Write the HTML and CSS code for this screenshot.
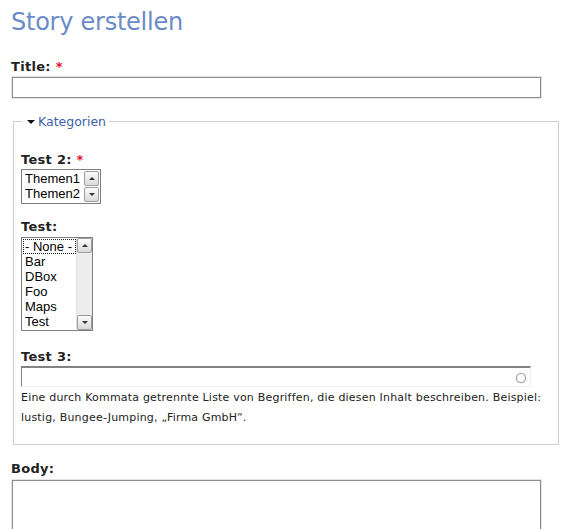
FILE: index.html
```html
<!DOCTYPE html>
<html lang="de">
<head>
<meta charset="utf-8">
<title>Story erstellen</title>
<link rel="stylesheet" href="styles.css">
</head>
<body>
<div class="page">
  <h1 class="page-title">Story erstellen</h1>
  <form class="node-form">
    <div class="form-item item-title">
      <label class="label" for="edit-title">Title: <span class="req">*</span></label>
      <input class="text-input title-input" id="edit-title" type="text">
    </div>

    <fieldset class="group">
      <legend class="legend"><span class="caret"></span><a class="legend-link" href="#">Kategorien</a></legend>

      <div class="form-item item-test2">
        <label class="label">Test 2: <span class="req">*</span></label>
        <div class="listbox lb-small" role="listbox">
          <div class="options">
            <div class="opt">Themen1</div>
            <div class="opt">Themen2</div>
          </div>
          <div class="sbar">
            <span class="sbtn up"></span>
            <span class="strack"></span>
            <span class="sbtn down"></span>
          </div>
        </div>
      </div>

      <div class="form-item item-test">
        <label class="label">Test:</label>
        <div class="listbox lb-large" role="listbox">
          <div class="options">
            <div class="opt focused">- None -</div>
            <div class="opt">Bar</div>
            <div class="opt">DBox</div>
            <div class="opt">Foo</div>
            <div class="opt">Maps</div>
            <div class="opt">Test</div>
          </div>
          <div class="sbar">
            <span class="sbtn up"></span>
            <span class="strack"></span>
            <span class="sbtn down"></span>
          </div>
        </div>
      </div>

      <div class="form-item item-test3">
        <label class="label" for="edit-test3">Test 3:</label>
        <div class="autocomplete">
          <input class="auto-input" id="edit-test3" type="text">
          <svg class="throbber" width="12" height="12" viewBox="0 0 12 12"><circle cx="6" cy="6" r="4.6" fill="none" stroke="#a9a9a9" stroke-width="1.4"/></svg>
        </div>
        <div class="description">Eine durch Kommata getrennte Liste von Begriffen, die diesen Inhalt beschreiben. Beispiel: lustig, Bungee-Jumping, „Firma GmbH“.</div>
      </div>
    </fieldset>

    <div class="form-item item-body">
      <label class="label" for="edit-body">Body:</label>
      <textarea class="body-area" id="edit-body"></textarea>
    </div>
  </form>
</div>
</body>
</html>
```

FILE: styles.css
```css
* { box-sizing: border-box; }
html, body { margin: 0; background: #fff; }
body {
  font-family: "DejaVu Sans", Verdana, sans-serif;
  color: #222;
}
.page {
  padding: 7px 12px 0 11px;
}
.page-title {
  margin: 0;
  font-size: 24px;
  line-height: 30px;
  font-weight: normal;
  letter-spacing: -0.25px;
  color: #6b8bc8;
}
.node-form {
  display: flex;
  flex-direction: column;
}
.form-item {
  display: flex;
  flex-direction: column;
  align-items: flex-start;
}
.label {
  display: block;
  font-size: 13px;
  font-weight: bold;
  line-height: 16px;
  letter-spacing: 0.3px;
  color: #222;
}
.req { color: #e3102b; }

.item-title { margin-top: 22px; }
.text-input {
  display: block;
  margin: 2px 0 0 1px;
  width: 529px;
  height: 21px;
  border: 1px solid #8e8e8e;
  box-shadow: 0 0 0 1px #e4e4e4;
  background: #fff;
  padding: 0 3px;
  font: 13px "DejaVu Sans", sans-serif;
}

.group {
  margin: 16px 2px 0 2px;
  border: 1px solid #cfcfcf;
  padding: 0 7px 16px 7px;
  min-width: 0;
}
.legend {
  margin-left: 1px;
  padding: 0 3px 0 5px;
  font-size: 12.5px;
  line-height: 15px;
  display: flex;
  align-items: center;
}
.caret {
  display: inline-block;
  width: 0;
  height: 0;
  border-left: 4px solid transparent;
  border-right: 4px solid transparent;
  border-top: 4px solid #111;
  margin-right: 3px;
  margin-top: 1px;
}
.legend-link {
  color: #3d60a8;
  text-decoration: none;
}

.item-test2 { margin-top: 23px; }
.item-test2 .listbox { margin-top: 1px; }
.item-test { margin-top: 15px; }
.item-test .listbox { margin-top: 2px; }
.item-test3 { margin-top: 18px; }

.listbox {
  display: flex;
  border: 1px solid #7f7f7f;
  background: #fff;
}
.lb-small { width: 80px; height: 35px; }
.lb-large { width: 72px; height: 94px; }
.options {
  flex: 1;
  padding: 1px 0 0 1px;
  font-family: "Liberation Sans", Arial, sans-serif;
  font-size: 13px;
  line-height: 15px;
  color: #000;
  overflow: hidden;
}
.opt {
  padding-left: 2px;
  height: 15px;
  white-space: nowrap;
}
.opt.focused {
  outline: 1px dotted #222;
  outline-offset: -1px;
}
.sbar {
  width: 16px;
  display: flex;
  flex-direction: column;
  padding: 1px 1px 1px 0;
}
.lb-large .sbar {
  background: #ededed;
  border-left: 1px solid #e2e2e2;
  padding: 0;
}
.sbtn {
  height: 15px;
  flex: none;
  border: 1px solid #9d9d9d;
  border-radius: 2px;
  background: linear-gradient(#fbfbfb, #dadada);
  display: flex;
  align-items: center;
  justify-content: center;
}
.sbtn::before {
  content: "";
  width: 0;
  height: 0;
  border-left: 3px solid transparent;
  border-right: 3px solid transparent;
}
.sbtn.up::before { border-bottom: 3px solid #333; }
.sbtn.down::before { border-top: 3px solid #333; }
.strack { flex: 1; }

.autocomplete {
  margin-top: 1px;
  width: 510px;
  height: 21px;
  display: flex;
  align-items: center;
  border-top: 2px solid #838383;
  border-left: 1px solid #838383;
  border-right: 1px solid #efefef;
  border-bottom: 1px solid #efefef;
  background: #fff;
}
.auto-input {
  flex: 1;
  height: 100%;
  border: none;
  outline: none;
  padding: 0 3px;
  font: 13px "DejaVu Sans", sans-serif;
  background: transparent;
}
.throbber {
  flex: none;
  margin-right: 3px;
  margin-top: 1px;
}
.description {
  margin-top: 1px;
  font-size: 11px;
  line-height: 20px;
  letter-spacing: 0.2px;
  color: #222;
}

.item-body { margin-top: 16px; }
.body-area {
  display: block;
  margin: 3px 0 0 1px;
  width: 529px;
  height: 150px;
  border: 1px solid #8e8e8e;
  box-shadow: 0 0 0 1px #e4e4e4;
  resize: none;
  font: 13px "DejaVu Sans", sans-serif;
}
```
